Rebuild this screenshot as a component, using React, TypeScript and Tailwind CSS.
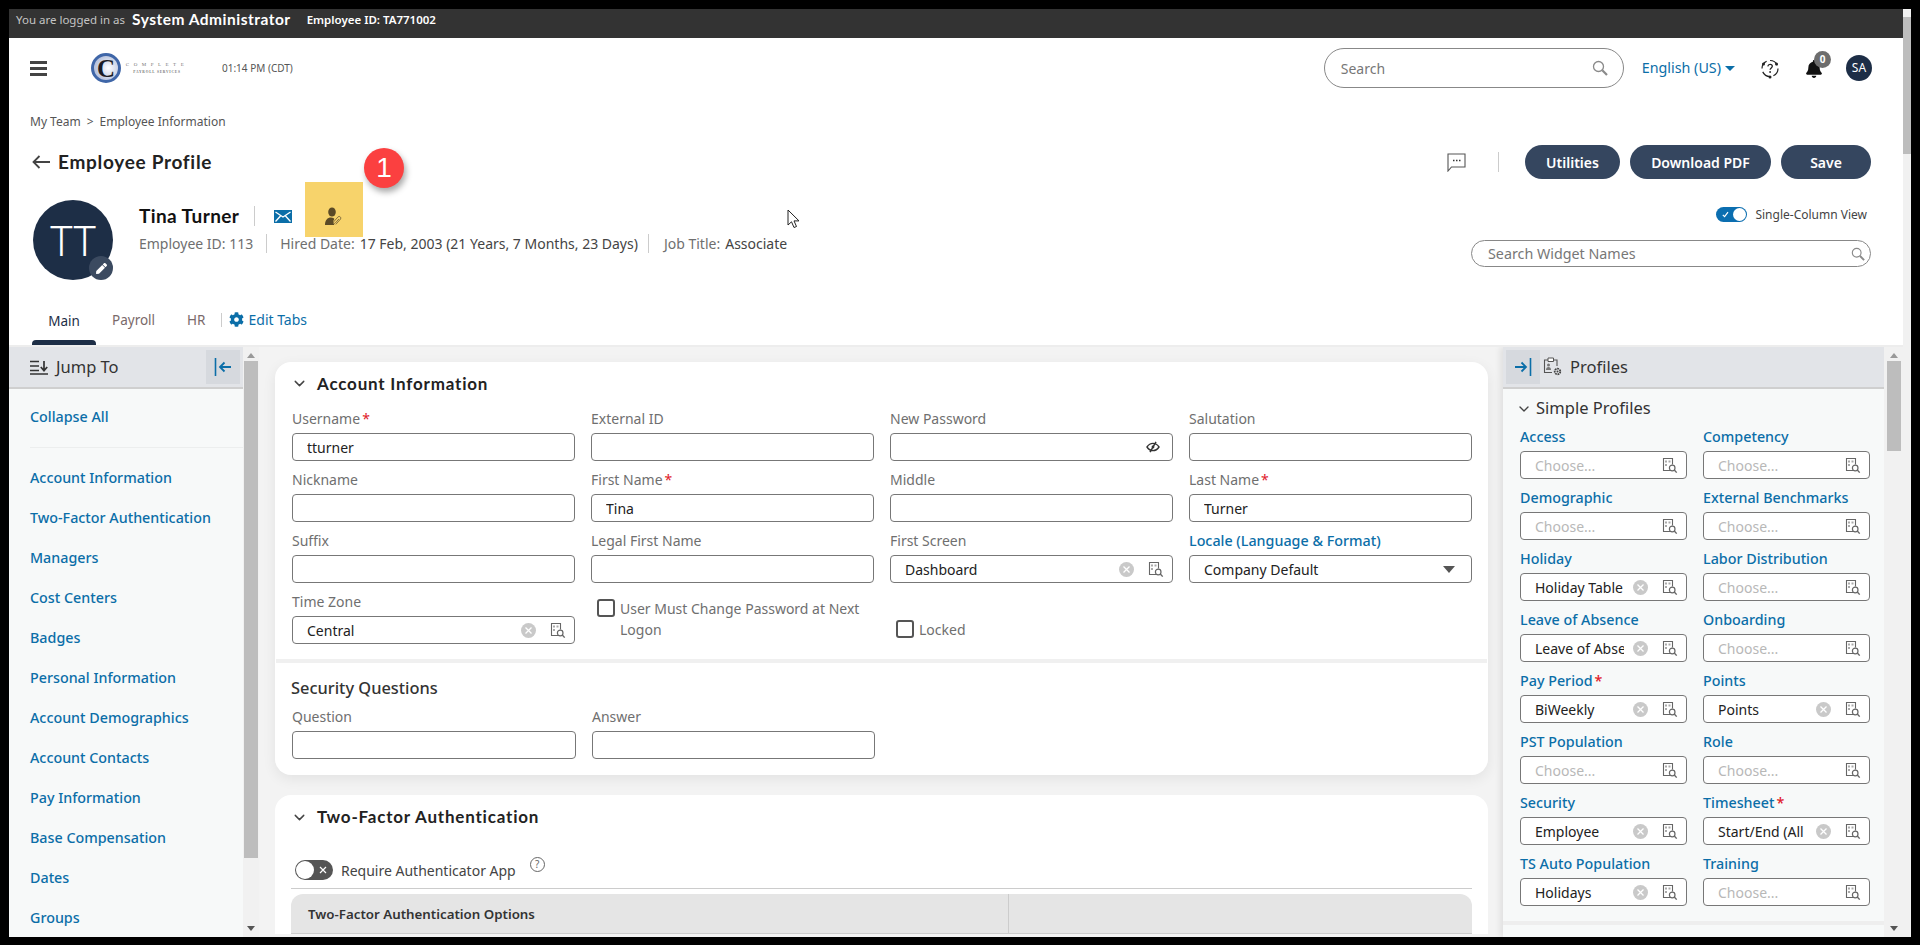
import { ChevronDown } from "lucide-react";
import { FaBell, FaCog, FaPen } from "react-icons/fa";

const BODY = "font-['Noto_Sans',sans-serif]";
const HEAD = "font-['Lato',sans-serif]";

// icons
function LookupIcon() {
  return (
    <svg width="16" height="17" viewBox="0 0 16 17" fill="none" className="shrink-0 text-[#666]">
      <path d="M9 13.500H1.500V1.500h9v6" stroke="currentColor" strokeWidth="1.100" />
      <path d="M3 3.500h2v2H3zM6.500 3.500h2v2h-2zM3 7h2v2H3z" fill="#aaa" />
      <circle cx="10.200" cy="11" r="2.800" stroke="currentColor" strokeWidth="1.200" />
      <path d="M12.300 13l2.400 2.600" stroke="currentColor" strokeWidth="1.400" />
    </svg>
  );
}

function ClearIcon() {
  return (
    <span className="flex h-[15px] w-[15px] shrink-0 items-center justify-center rounded-full bg-[#c9c9c9]">
      <svg width="9" height="9" viewBox="0 0 9 9">
        <path d="M1.500 1.500l6 6M7.500 1.500l-6 6" stroke="#fff" strokeWidth="1.300" />
      </svg>
    </span>
  );
}

function SearchGlyph({ size }: { size: number }) {
  return (
    <svg width={size} height={size} viewBox="0 0 16 16" fill="none" className="shrink-0">
      <circle cx="6.500" cy="6.500" r="5" stroke="#8a8a8a" strokeWidth="1.300" />
      <path d="M10.300 10.300L15 15" stroke="#8a8a8a" strokeWidth="2.200" />
    </svg>
  );
}

function EyeOffIcon() {
  return (
    <svg width="14" height="12" viewBox="0 0 14 12" fill="none" className="mr-[4px]">
      <path d="M1 6c2-3 4-3.600 6-3.600S11 3 13 6c-2 3-4 3.600-6 3.600S3 9 1 6z" stroke="#333" strokeWidth="1.400" />
      <circle cx="7" cy="6" r="1.400" fill="#333" />
      <path d="M10 .8L4 11.200" stroke="#333" strokeWidth="1.500" />
    </svg>
  );
}

function MailIcon() {
  return (
    <svg width="18" height="13" viewBox="0 0 18 13">
      <rect width="18" height="13" fill="#0b6ea8" />
      <path d="M1.500 2l7.500 5 7.500-5M1.500 11.500L6.500 6M16.500 11.500L11.500 6" stroke="#fff" strokeWidth="1.300" fill="none" />
    </svg>
  );
}

function PersonLinkIcon() {
  return (
    <svg width="19" height="19" viewBox="0 0 19 19" fill="none">
      <ellipse cx="8" cy="5" rx="3.800" ry="4.600" fill="#5b4a26" />
      <path d="M1 18c0-5 2.500-7.600 6-7.600 2 0 3 .8 3.400 1.600-1.400 1.400-1.400 4 0 6z" fill="#5b4a26" />
      <path d="M11.800 17.400l4.800-5.400a1.700 1.700 0 00-2.500-2.200l-4.400 5a1 1 0 001.400 1.400l3.800-4.200" stroke="#8a7440" strokeWidth="1" />
    </svg>
  );
}

function CollapseIcon({ flip }: { flip?: boolean }) {
  return (
    <svg width="18" height="20" viewBox="0 0 18 20" fill="none" className={flip ? "rotate-180" : ""}>
      <path d="M1.500 1v18" stroke="#0b6ea8" strokeWidth="1.600" />
      <path d="M17 10H6.500M10.500 5.500L6 10l4.500 4.500" stroke="#0b6ea8" strokeWidth="1.800" />
    </svg>
  );
}

function JumpIcon() {
  return (
    <svg width="19" height="15" viewBox="0 0 19 15" fill="none">
      <path d="M0 1.500h9M0 6h9M0 10.500h9M0 14h18" stroke="#333" strokeWidth="1.700" />
      <path d="M14 1v9M10.800 7l3.200 3.600L17.200 7" stroke="#333" strokeWidth="1.700" />
    </svg>
  );
}

function ProfilesIcon() {
  return (
    <svg width="20" height="20" viewBox="0 0 20 20" fill="none">
      <path d="M9 15.500H1.500V3h12.500v6" stroke="#555" strokeWidth="1.100" />
      <path d="M5 1h5.500v3.500H5z" stroke="#555" strokeWidth="1" fill="#fff" />
      <circle cx="5.500" cy="8" r="1.500" fill="#777" />
      <path d="M3 13c0-2 1-3 2.500-3S8 11 8 13z" fill="#777" />
      <circle cx="14.500" cy="14.500" r="2.800" stroke="#444" strokeWidth="1.800" strokeDasharray="1.800 .7" />
      <circle cx="14.500" cy="14.500" r="1" fill="#444" />
    </svg>
  );
}

function HelpCycleIcon() {
  return (
    <svg width="20" height="21" viewBox="0 0 20 21" fill="none">
      <circle cx="10" cy="10.500" r="8" stroke="#222" strokeWidth="1.200" strokeDasharray="9 3.500" />
      <circle cx="3.500" cy="6" r="1.500" fill="#222" />
      <circle cx="16.500" cy="6" r="1.500" fill="#222" />
      <circle cx="10" cy="19" r="1.500" fill="#222" />
      <path d="M7.800 8.300c.2-1.300 1.100-2 2.300-2s2.200.8 2.200 2c0 1.600-2.200 1.700-2.200 3.500" stroke="#222" strokeWidth="1.300" />
      <circle cx="10.100" cy="14" r=".9" fill="#222" />
    </svg>
  );
}

function CommentIcon() {
  return (
    <svg width="19" height="19" viewBox="0 0 19 19" fill="none">
      <path d="M1 1h17v13H4.500L1 18z" stroke="#555" strokeWidth="1.100" />
      <path d="M6 7.500h1.500M9 7.500h1.500M12 7.500h1.500" stroke="#333" strokeWidth="1.600" />
    </svg>
  );
}

function BackArrow() {
  return (
    <svg width="18" height="14" viewBox="0 0 18 14" fill="none" className="ml-[2px]">
      <path d="M18 7H1.500M7.500 1L1.500 7l6 6" stroke="#444" strokeWidth="1.800" />
    </svg>
  );
}

function MouseCursor() {
  return (
    <svg width="13" height="20" viewBox="0 0 13 20" className="absolute top-[209px] left-[787px]">
      <path d="M1 1v15l3.500-3.200 2.500 5.700 2.500-1-2.500-5.600H12z" fill="#fff" stroke="#222" strokeWidth="1" />
    </svg>
  );
}

function Logo() {
  return (
    <div className="flex items-center">
      <div className="flex h-[30px] w-[30px] items-center justify-center rounded-full border-[3px] border-[#3f66a8] bg-[radial-gradient(circle_at_60%_50%,#ffffff,#b9c4de_70%)]">
        <span className="font-['Liberation_Serif',serif] text-[25px] leading-none font-bold text-[#1c1c24]">C</span>
      </div>
      <div className="ml-[5px] flex w-[62px] flex-col items-center font-['Liberation_Serif',serif] whitespace-nowrap text-[#777]">
        <span className="text-[5px] leading-[6px] tracking-[4.500px]">COMPLETE</span>
        <span className="mt-[2px] text-[3.500px] leading-[4px] font-bold tracking-[0.800px]">PAYROLL SERVICES</span>
      </div>
    </div>
  );
}

// form field: label over a 28px box
type FieldProps = {
  label?: string;
  required?: boolean;
  value?: string;
  placeholder?: string;
  clear?: boolean;
  lookup?: boolean;
  eye?: boolean;
  caret?: boolean;
  blue?: boolean;
  short?: boolean;
};

function Field({ label, required, value, placeholder, clear, lookup, eye, caret, blue, short }: FieldProps) {
  return (
    <div className="flex min-w-0 flex-col">
      <div
        className={`flex ${short ? "h-[32px]" : "h-[33px]"} items-end pb-[4px] leading-5 ${
          blue ? "text-[14.300px] font-medium text-[#0b6ea8]" : "text-[14px] text-[#6f6f6f]"
        }`}
      >
        {label}
        {required && <span className="ml-[2px] text-[#e0202a]">*</span>}
      </div>
      <div className="flex h-[28px] items-center rounded-[4px] border border-[#777] bg-white pr-[8px] pl-[14px] text-[14px]">
        <span className={`min-w-0 flex-1 overflow-hidden whitespace-nowrap ${value ? "text-[#222]" : "text-[#b8b8b8]"}`}>
          {value || placeholder}
        </span>
        {clear && (
          <span className="mr-[14px] ml-[9px]">
            <ClearIcon />
          </span>
        )}
        {lookup && <LookupIcon />}
        {eye && <EyeOffIcon />}
        {caret && <span className="mr-[8px] h-0 w-0 border-x-[6px] border-t-[7px] border-x-transparent border-t-[#555]" />}
      </div>
    </div>
  );
}

function Check({ children, className }: { children: React.ReactNode; className: string }) {
  return (
    <div className={`flex text-[14px] leading-[21px] text-[#6f6f6f] ${className}`}>
      <span className="mt-[1px] h-[18px] w-[18px] shrink-0 rounded-[3px] border-2 border-[#555] bg-white" />
      <span className="ml-[5px]">{children}</span>
    </div>
  );
}

function ScrollTrack({ top, height, width }: { top: string; height: string; width: string }) {
  return (
    <div className={`relative flex shrink-0 flex-col items-center bg-[#f1f1f1] pt-[6px] ${width}`}>
      <span className="h-0 w-0 border-x-[4px] border-b-[5px] border-x-transparent border-b-[#999]" />
      <div className={`w-[14px] bg-[#bdbdbd] ${top} ${height}`} />
      <span className="absolute bottom-[6px] h-0 w-0 border-x-[4px] border-t-[5px] border-x-transparent border-t-[#555]" />
    </div>
  );
}

const JUMP_ITEMS = [
  "Account Information",
  "Two-Factor Authentication",
  "Managers",
  "Cost Centers",
  "Badges",
  "Personal Information",
  "Account Demographics",
  "Account Contacts",
  "Pay Information",
  "Base Compensation",
  "Dates",
  "Groups",
];

const PROFILES: FieldProps[] = [
  { label: "Access" },
  { label: "Competency" },
  { label: "Demographic" },
  { label: "External Benchmarks" },
  { label: "Holiday", value: "Holiday Table" },
  { label: "Labor Distribution" },
  { label: "Leave of Absence", value: "Leave of Absence" },
  { label: "Onboarding" },
  { label: "Pay Period", required: true, value: "BiWeekly" },
  { label: "Points", value: "Points" },
  { label: "PST Population" },
  { label: "Role" },
  { label: "Security", value: "Employee" },
  { label: "Timesheet", required: true, value: "Start/End (All Days)" },
  { label: "TS Auto Population", value: "Holidays" },
  { label: "Training" },
];

function TopBar() {
  return (
    <div className="flex h-[29px] shrink-0 items-center bg-[#333] pb-[8px] pl-[7px]">
      <span className="text-[11.500px] text-[#c4c4c4]">You are logged in as</span>
      <span className={`ml-[7px] text-[15.500px] font-bold tracking-[0.500px] text-white ${HEAD}`}>System Administrator</span>
      <span className="ml-[16px] text-[11.500px] font-semibold text-white">Employee ID: TA771002</span>
    </div>
  );
}

function NavRow() {
  return (
    <div className="flex h-[60px] items-center pr-[31px] pl-[21px]">
      <div className="flex w-[17px] flex-col gap-[3px]">
        <span className="h-[3px] bg-[#444]" />
        <span className="h-[3px] bg-[#444]" />
        <span className="h-[3px] bg-[#444]" />
      </div>
      <div className="ml-[44px]">
        <Logo />
      </div>
      <span className="ml-[34px] text-[10px] text-[#555]">01:14 PM (CDT)</span>
      <div className="ml-auto flex h-[40px] w-[300px] items-center rounded-full border border-[#888] pr-[15px] pl-[16px]">
        <span className="flex-1 text-[14px] text-[#777]">Search</span>
        <SearchGlyph size={16} />
      </div>
      <span className="ml-[18px] text-[14.300px] text-[#0b6ea8]">English (US)</span>
      <span className="mt-[1px] ml-[4px] h-0 w-0 border-x-[5px] border-t-[5px] border-x-transparent border-t-[#0b6ea8]" />
      <span className="ml-[25px]">
        <HelpCycleIcon />
      </span>
      <div className="relative ml-[25px] h-[26px] w-[41px] pt-[5px]">
        <FaBell size={18} className="text-[#111]" />
        <span className="absolute top-[-4px] left-[9px] flex h-[17px] w-[17px] items-center justify-center rounded-full bg-[#6d6d6d] text-[10px] font-bold text-white">
          0
        </span>
      </div>
      <span className="flex h-[26px] w-[26px] items-center justify-center rounded-full bg-[#1d2e46] text-[12px] text-white">SA</span>
    </div>
  );
}

function ProfileHead() {
  return (
    <div className="flex items-start justify-between pr-[32px] pl-[21px]">
      <div>
        <div className="flex h-[34px] items-center">
          <BackArrow />
          <span className={`ml-[8px] text-[19px] font-bold tracking-[0.700px] text-[#222] ${HEAD}`}>Employee Profile</span>
        </div>
        <div className="mt-[21px] ml-[3px] flex">
          <div className="relative flex h-[80px] w-[80px] items-center justify-center rounded-full bg-[#1d2e46]">
            <span className="text-[42px] leading-none font-light text-white">TT</span>
            <span className="absolute right-0 bottom-0 flex h-[24px] w-[24px] items-center justify-center rounded-full bg-[#3b4a60]">
              <FaPen size={11} className="text-white" />
            </span>
          </div>
          <div className="ml-[26px] pt-[6px]">
            <div className="flex h-[20px] items-center">
              <span className={`text-[19px] font-bold tracking-[0.400px] text-[#111] ${HEAD}`}>Tina Turner</span>
              <span className="ml-[15px] h-[20px] w-px bg-[#ccc]" />
              <span className="ml-[19px]">
                <MailIcon />
              </span>
              <span className="ml-[15px] h-[20px] w-px bg-[#bba860]" />
              <span className="relative z-10 ml-[16px]">
                <PersonLinkIcon />
              </span>
            </div>
            <div className="mt-[7px] flex h-[20px] items-center text-[14px] whitespace-nowrap text-[#6f6f6f]">
              <span>Employee ID: 113</span>
              <span className="mx-[13px] h-[19px] w-px bg-[#ccc]" />
              <span>Hired Date:</span>
              <span className="ml-[5px] text-[#444]">17 Feb, 2003 (21 Years, 7 Months, 23 Days)</span>
              <span className="mr-[15px] ml-[10px] h-[19px] w-px bg-[#ccc]" />
              <span>Job Title:</span>
              <span className="ml-[5px] text-[#444]">Associate</span>
            </div>
          </div>
        </div>
      </div>
      <div className="flex flex-col items-end">
        <div className="flex items-center">
          <CommentIcon />
          <span className="mr-[26px] ml-[32px] h-[20px] w-px bg-[#ccc]" />
          <div className="flex gap-[10px] text-[14px] font-semibold text-white">
            <span className="flex h-[34px] w-[95px] items-center justify-center rounded-full bg-[#35465f]">Utilities</span>
            <span className="flex h-[34px] w-[141px] items-center justify-center rounded-full bg-[#35465f]">Download PDF</span>
            <span className="flex h-[34px] w-[90px] items-center justify-center rounded-full bg-[#35465f]">Save</span>
          </div>
        </div>
        <div className="mt-[27px] flex h-[17px] items-center pr-[4px]">
          <span className="flex h-[15px] w-[31px] items-center justify-between rounded-full bg-[#0b6eb0] pr-[1px] pl-[6px]">
            <svg width="7" height="7" viewBox="0 0 7 7" fill="none">
              <path d="M.8 3.800l1.800 1.800L6 1.200" stroke="#fff" strokeWidth="1.200" />
            </svg>
            <span className="h-[13px] w-[13px] rounded-full bg-white" />
          </span>
          <span className="ml-[8px] text-[12px] text-[#444]">Single-Column View</span>
        </div>
        <div className="mt-[17px] flex h-[27px] w-[400px] items-center rounded-full border border-[#888] pr-[5px] pl-[16px]">
          <span className="flex-1 text-[14.300px] text-[#777]">Search Widget Names</span>
          <SearchGlyph size={14} />
        </div>
      </div>
    </div>
  );
}

function Tabs() {
  return (
    <div className="mt-[20px] flex h-[45px] pl-[23px] text-[13.500px]">
      <div className="flex w-[64px] flex-col items-center">
        <span className="flex flex-1 items-center pt-[3px] text-[#1d2e46]">Main</span>
        <span className="h-[5px] w-full rounded-t-[4px] bg-[#1d2e46]" />
      </div>
      <span className="ml-[16px] flex items-center pb-[5px] text-[#7a6a6a]">Payroll</span>
      <span className="ml-[32px] flex items-center pb-[5px] text-[#7a6a6a]">HR</span>
      <span className="ml-[16px] flex items-center pb-[5px]">
        <span className="h-[14px] w-px bg-[#ccc]" />
      </span>
      <span className="ml-[7px] flex items-center gap-[4px] pb-[6px] text-[14px] text-[#0b6ea8]">
        <FaCog size={15} />
        Edit Tabs
      </span>
    </div>
  );
}

function JumpPanel() {
  return (
    <div className="flex w-[234px] shrink-0 flex-col bg-[#f7f9f9]">
      <div className="flex h-[42px] shrink-0 items-center border-b-2 border-[#cfcfcf] bg-[#e2e4e8] pr-[3px] pl-[21px]">
        <JumpIcon />
        <span className="ml-[7px] flex-1 pt-[1px] text-[16.500px] text-[#333]">Jump To</span>
        <span className="flex h-[34px] w-[34px] items-center justify-center bg-[#d6d9de]">
          <CollapseIcon />
        </span>
      </div>
      <div className="overflow-hidden pt-[8px] pl-[21px] text-[14.300px] font-medium text-[#0b6ea8]">
        <div className="flex h-[40px] items-center">Collapse All</div>
        <div className="my-[10px] h-px bg-[#eceeee]" />
        {JUMP_ITEMS.map((item) => (
          <div key={item} className="flex h-[40px] items-center whitespace-nowrap">
            {item}
          </div>
        ))}
      </div>
    </div>
  );
}

function ProfilesPanel() {
  return (
    <div className="flex w-[381px] shrink-0 flex-col bg-[#f7f9f9] shadow-[-3px_0_6px_rgba(0,0,0,0.08)]">
      <div className="flex h-[42px] shrink-0 items-center border-b-2 border-[#cfcfcf] bg-[#e2e4e8] pl-[3px]">
        <span className="flex h-[34px] w-[34px] items-center justify-center bg-[#d6d9de]">
          <CollapseIcon flip />
        </span>
        <span className="ml-[3px]">
          <ProfilesIcon />
        </span>
        <span className="ml-[7px] pt-[1px] text-[16.500px] text-[#333]">Profiles</span>
      </div>
      <div className="flex h-[29px] shrink-0 items-center pt-[10px] pl-[13px]">
        <ChevronDown size={16} className="text-[#444]" />
        <span className="ml-[4px] text-[16.500px] text-[#333]">Simple Profiles</span>
      </div>
      <div className="grid grid-cols-[167px_167px] gap-x-[16px] pl-[17px]">
        {PROFILES.map((p) => (
          <Field key={p.label} {...p} blue lookup clear={!!p.value} placeholder="Choose..." />
        ))}
      </div>
      <div className="mt-[15px] h-[4px] bg-[#eeeeee]" />
    </div>
  );
}

function AccountCard() {
  return (
    <section className="rounded-[16px] bg-white px-[1px] pb-[16px] shadow-[0_4px_14px_rgba(0,0,0,0.07)]">
      <div className="flex h-[38px] items-center pt-[5px] pl-[15px]">
        <ChevronDown size={17} className="text-[#444]" />
        <span className={`ml-[9px] text-[17px] font-bold tracking-[0.800px] text-[#222] ${HEAD}`}>Account Information</span>
      </div>
      <div className="grid grid-cols-[repeat(4,283px)] gap-x-[16px] pl-[16px]">
        <Field label="Username" required value="tturner" />
        <Field label="External ID" />
        <Field label="New Password" eye />
        <Field label="Salutation" />
        <Field label="Nickname" />
        <Field label="First Name" required value="Tina" />
        <Field label="Middle" />
        <Field label="Last Name" required value="Turner" />
        <Field label="Suffix" />
        <Field label="Legal First Name" />
        <Field label="First Screen" value="Dashboard" clear lookup />
        <Field label="Locale (Language & Format)" blue value="Company Default" caret />
        <Field label="Time Zone" value="Central" clear lookup />
        <Check className="ml-[6px] w-[270px] pt-[15px]">User Must Change Password at Next Logon</Check>
        <Check className="ml-[6px] items-start pt-[36px]">Locked</Check>
      </div>
      <div className="mt-[15px] h-[4px] bg-[#f0f0f0]" />
      <h3 className="mt-[14px] h-[22px] pl-[15px] text-[16.400px] leading-[22px] font-medium text-[#333]">Security Questions</h3>
      <div className="grid grid-cols-[284px_283px] gap-x-[16px] pl-[16px]">
        <Field label="Question" short />
        <Field label="Answer" short />
      </div>
    </section>
  );
}

function TwoFactorCard() {
  return (
    <section className="mt-[20px] rounded-t-[16px] bg-white px-[16px]">
      <div className="flex h-[44px] items-center">
        <ChevronDown size={17} className="text-[#444]" />
        <span className={`ml-[9px] text-[17px] font-bold tracking-[0.800px] text-[#222] ${HEAD}`}>Two-Factor Authentication</span>
      </div>
      <div className="mt-[21px] flex h-[20px] items-center pl-[4px]">
        <span className="flex h-[20px] w-[38px] items-center justify-between rounded-full bg-[#555] pr-[6px] pl-[1px]">
          <span className="h-[18px] w-[18px] rounded-full bg-white" />
          <svg width="8" height="8" viewBox="0 0 8 8">
            <path d="M1 1l6 6M7 1L1 7" stroke="#fff" strokeWidth="1.200" />
          </svg>
        </span>
        <span className="ml-[8px] text-[14px] text-[#444]">Require Authenticator App</span>
        <span className="mb-[12px] ml-[14px] flex h-[15px] w-[15px] items-center justify-center rounded-full border border-[#666] text-[10px] text-[#666]">
          ?
        </span>
      </div>
      <div className="mt-[8px] h-px bg-[#ccc]" />
      <div className="mt-[5px] flex h-[40px] items-center rounded-t-[12px] border-b border-[#ccc] bg-[#e5e5e5] text-[13.300px] font-semibold text-[#333]">
        <span className="w-[717px] pt-[2px] pl-[17px]">Two-Factor Authentication Options</span>
        <span className="h-full w-px bg-[#ccc]" />
      </div>
    </section>
  );
}

export default function App() {
  return (
    <div className={`relative flex h-[945px] w-[1920px] overflow-hidden bg-black pt-[9px] pr-[9px] pb-[8px] pl-[9px] ${BODY}`}>
      <div className="flex min-w-0 flex-1 flex-col bg-white">
        <TopBar />
        <NavRow />
        <div className="flex h-[47px] items-start pt-[15px] pl-[21px] text-[12px] text-[#555]">
          <span>My Team</span>
          <span className="mx-[6px]">&gt;</span>
          <span>Employee Information</span>
        </div>
        <ProfileHead />
        <Tabs />
        <div className="h-[2px] shrink-0 bg-[#ededed]" />
        <div className="flex min-h-0 flex-1 overflow-hidden">
          <JumpPanel />
          <ScrollTrack top="mt-[3px]" height="h-[497px]" width="w-[16px]" />
          <main className="min-w-0 flex-1 overflow-hidden bg-[#f3f3f3] pt-[15px] pr-[15px] pl-[16px]">
            <AccountCard />
            <TwoFactorCard />
          </main>
          <ProfilesPanel />
          <ScrollTrack top="mt-[3px]" height="h-[90px]" width="w-[19px]" />
        </div>
      </div>
      <div className="flex w-[8px] shrink-0 flex-col bg-[#f1f1f1] pt-[8px]">
        <div className="h-[137px] bg-[#bdbdbd]" />
      </div>
      <div className="absolute top-[182px] left-[305px] h-[55px] w-[58px] bg-[#f7d36b]" />
      <span className="absolute top-[148px] left-[364px] flex h-[40px] w-[40px] items-center justify-center rounded-full bg-[#fb4040] font-['Liberation_Sans',sans-serif] text-[28px] text-white shadow-[2px_4px_6px_rgba(0,0,0,0.35)]">
        1
      </span>
      <MouseCursor />
    </div>
  );
}
